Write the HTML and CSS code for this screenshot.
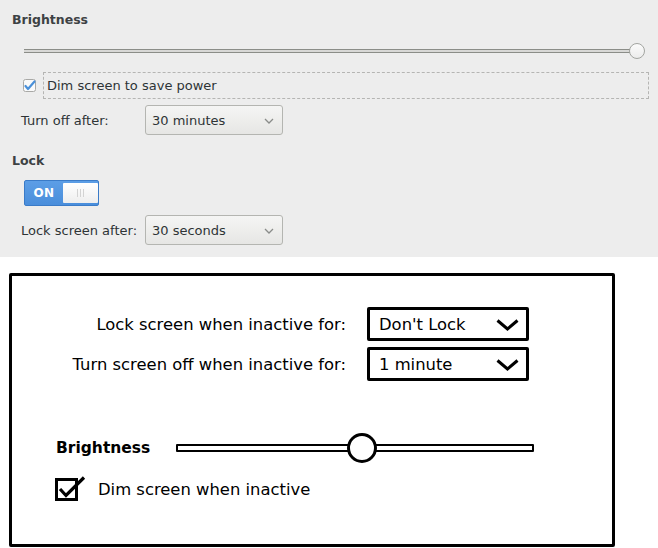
FILE: index.html
```html
<!DOCTYPE html>
<html>
<head>
<meta charset="utf-8">
<link rel="stylesheet" href="styles.css">
</head>
<body>
<div class="gnome">
  <div class="g-heading">Brightness</div>
  <div class="g-slider">
    <div class="g-track"></div>
    <div class="g-knob"></div>
  </div>
  <div class="g-check-row">
    <span class="g-checkbox">
      <svg width="13" height="13" viewBox="0 0 13 13"><rect x="0.5" y="0.5" width="12" height="12" rx="2" fill="#fafafa" stroke="#a9a9a6"/><path d="M2.5 7 L5 10 L11.5 2.5" fill="none" stroke="#4a90d9" stroke-width="2.2" stroke-linecap="round" stroke-linejoin="round"/></svg>
    </span>
    <span class="g-focus">Dim screen to save power</span>
  </div>
  <div class="g-row g-row-first">
    <span class="g-label">Turn off after:</span>
    <div class="g-select">
      <span>30 minutes</span>
      <svg width="10" height="6" viewBox="0 0 10 6"><path d="M1 1 L5 5 L9 1" fill="none" stroke="#8a8c8a" stroke-width="1.3"/></svg>
    </div>
  </div>
  <div class="g-heading g-heading-lock">Lock</div>
  <div class="g-toggle">
    <span class="g-on">ON</span>
    <span class="g-switch"><i></i><i></i><i></i></span>
  </div>
  <div class="g-row g-row-lock">
    <span class="g-label">Lock screen after:</span>
    <div class="g-select">
      <span>30 seconds</span>
      <svg width="10" height="6" viewBox="0 0 10 6"><path d="M1 1 L5 5 L9 1" fill="none" stroke="#8a8c8a" stroke-width="1.3"/></svg>
    </div>
  </div>
</div>

<div class="wire-wrap">
  <div class="wire">
    <div class="w-row w-row-first">
      <span class="w-label">Lock screen when inactive for:</span>
      <div class="w-select">
        <span>Don't Lock</span>
        <svg width="23" height="12" viewBox="0 0 23 12"><path d="M1.5 1.5 L11.5 10 L21.5 1.5" fill="none" stroke="#000" stroke-width="3"/></svg>
      </div>
    </div>
    <div class="w-row">
      <span class="w-label">Turn screen off when inactive for:</span>
      <div class="w-select">
        <span>1 minute</span>
        <svg width="23" height="12" viewBox="0 0 23 12"><path d="M1.5 1.5 L11.5 10 L21.5 1.5" fill="none" stroke="#000" stroke-width="3"/></svg>
      </div>
    </div>
    <div class="w-bright">
      <span class="w-bright-label">Brightness</span>
      <div class="w-slider">
        <div class="w-track"></div>
        <div class="w-knob"></div>
      </div>
    </div>
    <div class="w-check">
      <svg width="32" height="27" viewBox="0 0 32 27"><rect x="2.5" y="3.5" width="20" height="20" fill="none" stroke="#000" stroke-width="3"/><path d="M6 13 L12 19.5 L30 1.5" fill="none" stroke="#000" stroke-width="3.2"/></svg>
      <span>Dim screen when inactive</span>
    </div>
  </div>
</div>
</body>
</html>
```

FILE: styles.css
```css
* { box-sizing: border-box; }
html, body { margin: 0; padding: 0; background: #ffffff; }
body { width: 658px; height: 548px; overflow: hidden; }

.gnome {
  height: 257px;
  background: #ededed;
  padding-top: 12px;
  font-family: "DejaVu Sans", sans-serif;
  font-size: 13px;
  color: #2e3436;
  display: flex;
  flex-direction: column;
}
.g-heading {
  margin-left: 12px;
  height: 16px;
  line-height: 16px;
  font-weight: bold;
  font-size: 12.5px;
  color: #3d4244;
}
.g-heading-lock { margin-top: 18px; }

.g-slider {
  margin-top: 15px;
  margin-left: 24px;
  width: 621px;
  height: 16px;
  display: flex;
  align-items: center;
}
.g-track {
  width: 606px;
  height: 4px;
  border-top: 1px solid #8b8d88;
  border-bottom: 1px solid #8b8d88;
  background: #d8d8d6;
}
.g-knob {
  width: 16px;
  height: 16px;
  margin-left: -1px;
  border-radius: 50%;
  border: 1px solid #a3a5a1;
  background: linear-gradient(#fbfbfb, #ececec);
}

.g-check-row {
  margin-top: 13px;
  display: flex;
  align-items: center;
  height: 27px;
}
.g-checkbox {
  margin-left: 23px;
  width: 13px;
  height: 13px;
  display: flex;
  margin-right: 7px;
}
.g-focus {
  width: 606px;
  height: 27px;
  border: 1px dashed #b5b5b3;
  padding-left: 3px;
  line-height: 26px;
}

.g-row {
  display: flex;
  align-items: center;
  height: 30px;
}
.g-row-first { margin-top: 6px; }
.g-row-lock { margin-top: 9px; }
.g-label {
  margin-left: 21px;
  width: 124px;
  color: #2e3436;
}
.g-select {
  width: 138px;
  height: 30px;
  border: 1px solid #b4b5b1;
  border-radius: 3px;
  background: linear-gradient(#f5f5f4, #e6e6e4);
  display: flex;
  align-items: center;
  justify-content: space-between;
  padding: 0 8px 0 6px;
}
.g-select svg { margin-top: 1px; }

.g-toggle {
  margin-top: 11px;
  margin-left: 24px;
  width: 75px;
  height: 26px;
  border: 1px solid #3a7bc8;
  border-radius: 2px;
  background: linear-gradient(#5c9ee6, #4a8edb);
  display: flex;
  align-items: center;
  padding: 2px 0 2px 0;
}
.g-on {
  width: 38px;
  text-align: center;
  color: #ffffff;
  font-weight: bold;
  font-size: 12px;
  letter-spacing: 0.5px;
}
.g-switch {
  width: 35px;
  height: 20px;
  background: linear-gradient(#ffffff, #eeeeee);
  border-radius: 1px;
  display: flex;
  justify-content: center;
  align-items: center;
  gap: 2px;
}
.g-switch i {
  display: block;
  width: 1px;
  height: 8px;
  background: #d3d3d3;
}

.wire-wrap {
  padding: 16px 0 0 9px;
  font-family: "DejaVu Sans", sans-serif;
  font-size: 16.4px;
  color: #000;
}
.wire {
  width: 606px;
  height: 274px;
  border: 3px solid #000;
  border-radius: 2px;
  display: flex;
  flex-direction: column;
}
.w-row {
  display: flex;
  align-items: center;
  height: 34px;
  margin-top: 6px;
}
.w-row-first { margin-top: 31px; }
.w-label {
  width: 334px;
  text-align: right;
  margin-right: 21px;
}
.w-select {
  width: 162px;
  height: 34px;
  border: 3px solid #000;
  border-radius: 2px;
  display: flex;
  align-items: center;
  justify-content: space-between;
  padding: 0 7px 0 9px;
}
.w-select svg { margin-top: 1px; }

.w-bright {
  margin-top: 52px;
  margin-left: 44px;
  display: flex;
  align-items: center;
  height: 30px;
}
.w-bright-label {
  width: 120px;
  font-weight: bold;
  font-size: 15.5px;
}
.w-slider {
  position: relative;
  width: 358px;
  height: 30px;
  display: flex;
  align-items: center;
}
.w-track {
  width: 358px;
  height: 8px;
  border: 2.5px solid #000;
  border-radius: 1px;
  background: #fff;
}
.w-knob {
  position: absolute;
  left: 171px;
  top: 0;
  width: 30px;
  height: 30px;
  border: 3px solid #000;
  border-radius: 50%;
  background: #fff;
}

.w-check {
  margin-top: 13px;
  margin-left: 42px;
  display: flex;
  align-items: center;
  height: 27px;
}
.w-check svg { margin-right: 12px; }
```
